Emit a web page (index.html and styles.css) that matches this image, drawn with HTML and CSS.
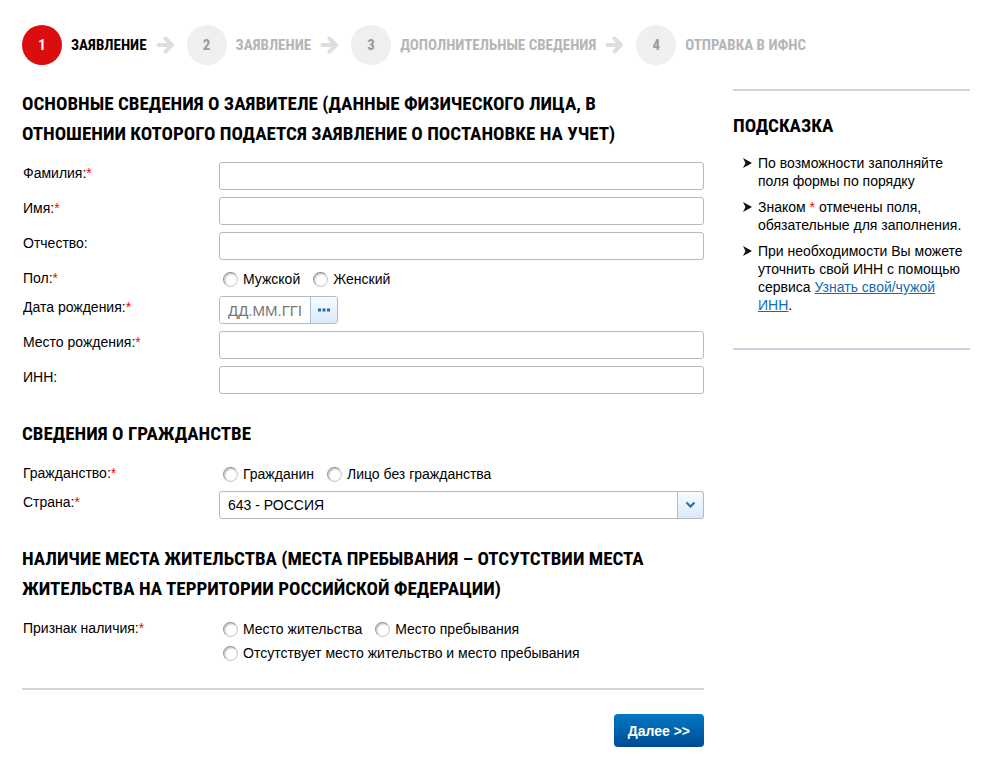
FILE: index.html
```html
<!DOCTYPE html>
<html lang="ru">
<head>
<meta charset="utf-8">
<title>Заявление</title>
<link rel="stylesheet" href="styles.css">
</head>
<body>
<svg class="sprite" aria-hidden="true">
  <symbol id="arrow" viewBox="0 0 19 18"><path d="M2.5 9H15M9.500 2.500 16 9l-6.500 6.500" fill="none" stroke="#dedede" stroke-width="4" stroke-linecap="round" stroke-linejoin="round"/></symbol>
  <symbol id="marker" viewBox="0 0 9 10"><path d="M0 0 9 5 0 10 2.500 5Z" fill="#111"/></symbol>
</svg>
<ol class="steps">
  <li class="step step-active"><span class="step-number">1</span><span class="step-title">ЗАЯВЛЕНИЕ</span><svg class="step-arrow"><use href="#arrow"/></svg></li>
  <li class="step"><span class="step-number">2</span><span class="step-title">ЗАЯВЛЕНИЕ</span><svg class="step-arrow"><use href="#arrow"/></svg></li>
  <li class="step"><span class="step-number">3</span><span class="step-title">ДОПОЛНИТЕЛЬНЫЕ СВЕДЕНИЯ</span><svg class="step-arrow"><use href="#arrow"/></svg></li>
  <li class="step"><span class="step-number">4</span><span class="step-title">ОТПРАВКА В ИФНС</span></li>
</ol>
<div class="layout">
  <form class="form">
    <section class="section">
      <h2 class="heading">ОСНОВНЫЕ СВЕДЕНИЯ О ЗАЯВИТЕЛЕ (ДАННЫЕ ФИЗИЧЕСКОГО ЛИЦА, В<br>ОТНОШЕНИИ КОТОРОГО ПОДАЕТСЯ ЗАЯВЛЕНИЕ О ПОСТАНОВКЕ НА УЧЕТ)</h2>
      <div class="field"><label class="label" for="surname">Фамилия:<span class="required">*</span></label><input class="input" id="surname" type="text"></div>
      <div class="field"><label class="label" for="name">Имя:<span class="required">*</span></label><input class="input" id="name" type="text"></div>
      <div class="field"><label class="label" for="patronymic">Отчество:</label><input class="input" id="patronymic" type="text"></div>
      <div class="field field-radio" role="radiogroup" aria-labelledby="sex">
        <span class="label" id="sex">Пол:<span class="required">*</span></span>
        <div class="options">
          <label class="option"><input class="radio" type="radio" name="sex">Мужской</label>
          <label class="option"><input class="radio" type="radio" name="sex">Женский</label>
        </div>
      </div>
      <div class="field">
        <label class="label" for="birth">Дата рождения:<span class="required">*</span></label>
        <div class="date"><input class="date-input" id="birth" type="text" placeholder="ДД.ММ.ГГГГ"><button class="date-button" type="button" aria-label="Выбрать дату"><svg width="12" height="4" viewBox="0 0 12 4"><path d="M0 .5h3v3H0zM4.500 .5h3v3h-3zM9 .5h3v3H9z" fill="#1a6fb8"/></svg></button></div>
      </div>
      <div class="field"><label class="label" for="place">Место рождения:<span class="required">*</span></label><input class="input" id="place" type="text"></div>
      <div class="field"><label class="label" for="inn">ИНН:</label><input class="input" id="inn" type="text"></div>
    </section>
    <section class="section">
      <h2 class="heading">СВЕДЕНИЯ О ГРАЖДАНСТВЕ</h2>
      <div class="field field-radio" role="radiogroup" aria-labelledby="citizen">
        <span class="label" id="citizen">Гражданство:<span class="required">*</span></span>
        <div class="options">
          <label class="option"><input class="radio" type="radio" name="citizen">Гражданин</label>
          <label class="option"><input class="radio" type="radio" name="citizen">Лицо без гражданства</label>
        </div>
      </div>
      <div class="field">
        <label class="label" for="country">Страна:<span class="required">*</span></label>
        <div class="select-box"><select class="select" id="country"><option>643 - РОССИЯ</option></select><span class="select-arrow"><svg width="11" height="8" viewBox="0 0 11 8"><path d="M1.500 1.500l4 4 4-4" fill="none" stroke="#1a6fb8" stroke-width="2"/></svg></span></div>
      </div>
    </section>
    <section class="section">
      <h2 class="heading">НАЛИЧИЕ МЕСТА ЖИТЕЛЬСТВА (МЕСТА ПРЕБЫВАНИЯ – ОТСУТСТВИИ МЕСТА<br>ЖИТЕЛЬСТВА НА ТЕРРИТОРИИ РОССИЙСКОЙ ФЕДЕРАЦИИ)</h2>
      <div class="field field-radio" role="radiogroup" aria-labelledby="residence">
        <span class="label" id="residence">Признак наличия:<span class="required">*</span></span>
        <div class="options">
          <label class="option"><input class="radio" type="radio" name="residence">Место жительства</label>
          <label class="option"><input class="radio" type="radio" name="residence">Место пребывания</label>
          <label class="option"><input class="radio" type="radio" name="residence">Отсутствует место жительство и место пребывания</label>
        </div>
      </div>
    </section>
    <div class="actions"><button class="next" type="submit">Далее &gt;&gt;</button></div>
  </form>
  <aside class="hint">
    <h2 class="heading">ПОДСКАЗКА</h2>
    <ul class="hint-list">
      <li class="hint-item"><svg class="hint-marker"><use href="#marker"/></svg><span>По возможности заполняйте поля формы по порядку</span></li>
      <li class="hint-item"><svg class="hint-marker"><use href="#marker"/></svg><span>Знаком <span class="required">*</span> отмечены поля, обязательные для заполнения.</span></li>
      <li class="hint-item"><svg class="hint-marker"><use href="#marker"/></svg><span>При необходимости Вы можете уточнить свой ИНН с помощью сервиса <a class="link" href="#">Узнать свой/чужой ИНН</a>.</span></li>
    </ul>
  </aside>
</div>
</body>
</html>
```
FILE: styles.css
```css
* { box-sizing: border-box; }
body {
  margin: 0;
  padding: 25px 30px 28px 22px;
  background: #fff;
  color: #000;
  font: 14px/18px "Liberation Sans", Arial, sans-serif;
}
.sprite { display: none; }
.steps {
  display: flex;
  margin: 0 0 24px;
  padding: 0;
  list-style: none;
  color: #b5b5b5;
  font-family: "Roboto Condensed", "Liberation Sans Narrow", "Liberation Sans", sans-serif;
  font-size: 15px;
  font-weight: bold;
}
.step { display: flex; align-items: center; white-space: nowrap; }
.step-number {
  display: flex;
  align-items: center;
  justify-content: center;
  width: 40px;
  height: 40px;
  margin-right: 9px;
  border-radius: 50%;
  background: #efefef;
  color: #999;
}
.step-active { color: #000; }
.step-active .step-number { background: #dc0d0e; color: #fff; }
.step-arrow { width: 19px; height: 18px; margin: 0 12px 0 9px; }
.layout {
  display: grid;
  grid-template-columns: minmax(0, 1fr) 237px;
  gap: 29px;
  align-items: start;
}
.heading {
  margin: 0 0 13px;
  font: bold 19px/30px "Roboto Condensed", "Liberation Sans Narrow", "Liberation Sans", sans-serif;
}
.section { margin-bottom: 25px; }
.section:last-of-type { margin-bottom: 23px; }
.field {
  display: grid;
  grid-template-columns: 196px 1fr;
  align-items: start;
  margin-bottom: 7px;
  padding-left: 1px;
}
.field-radio { margin-bottom: 5px; }
.field:last-child { margin-bottom: 0; }
.label { line-height: 22px; }
.required { color: #f00; }
.input, .select, .date {
  height: 28px;
  border: 1px solid #b9b9b9;
  border-radius: 3px;
  background: #fff;
  font: 14px "Liberation Sans", Arial, sans-serif;
}
.input { width: 100%; padding: 0 8px; }
.options { display: flex; flex-wrap: wrap; column-gap: 13px; padding-left: 4px; }
.option { display: flex; align-items: center; gap: 5px; line-height: 24px; }
.radio {
  appearance: none;
  width: 15px;
  height: 15px;
  margin: 0;
  border: 1px solid #ccc;
  border-top-color: #8c8c8c;
  border-left-color: #999;
  border-radius: 50%;
  background: #fff;
  box-shadow: inset 1px 1px 2px #bbb;
}
.date { display: flex; width: 119px; overflow: hidden; }
.date-input {
  flex: 1;
  min-width: 0;
  padding: 0 9px 0 8px;
  border: 0;
  font: 15px "Liberation Sans", Arial, sans-serif;
}
.date-input::placeholder { color: #777; }
.date-button {
  display: flex;
  align-items: center;
  justify-content: center;
  width: 27px;
  padding: 0;
  border: 0;
  border-left: 1px solid #a9c3dd;
  background: linear-gradient(#f7fbff, #dbe9f9);
}
.select-box { display: grid; }
.select { grid-area: 1 / 1; width: 100%; padding: 0 8px; appearance: none; color: #000; }
.select-arrow {
  grid-area: 1 / 1;
  justify-self: end;
  display: flex;
  align-items: center;
  justify-content: center;
  width: 27px;
  height: 28px;
  border: 1px solid #b9b9b9;
  border-radius: 0 3px 3px 0;
  background: linear-gradient(#f7fbff, #dbe9f9);
  pointer-events: none;
}
.actions {
  display: flex;
  justify-content: flex-end;
  padding-top: 24px;
  border-top: 2px solid #d0d7df;
}
.next {
  height: 33px;
  padding: 0 14px;
  border: 0;
  border-radius: 4px;
  background: linear-gradient(#0078c3, #004c94);
  color: #fff;
  font: bold 14px "Liberation Sans", Arial, sans-serif;
}
.hint {
  padding: 20px 0 34px;
  border: solid #c9d5e1;
  border-width: 2px 0;
}
.hint-list { display: grid; gap: 8px; margin: 0; padding: 0 0 0 10px; list-style: none; }
.hint-item { display: flex; gap: 6px; }
.hint-marker { flex: none; width: 9px; height: 10px; margin-top: 4px; }
.link { color: #106cb5; }
```
